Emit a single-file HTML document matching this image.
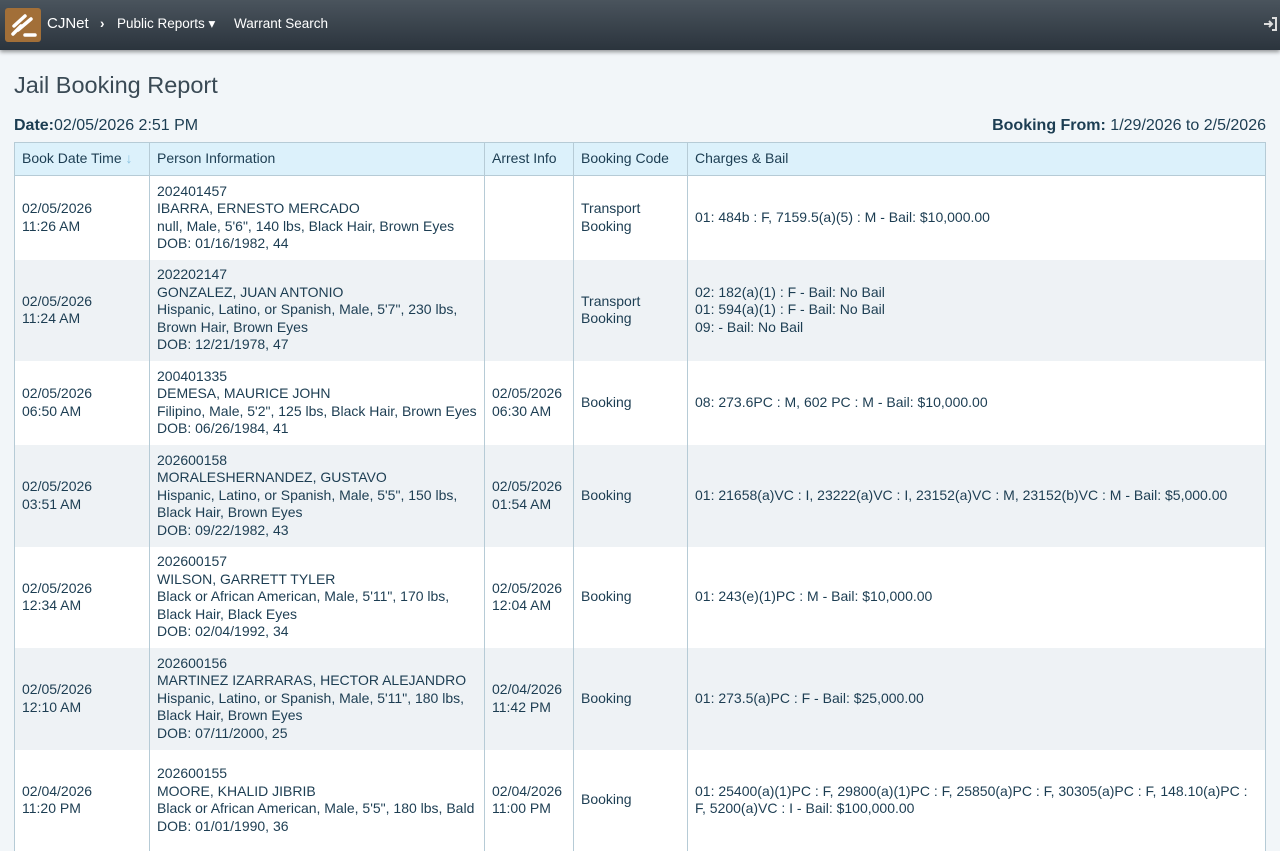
<!DOCTYPE html>
<html><head><meta charset="utf-8"><style>
*{box-sizing:border-box}
body{margin:0;width:1280px;height:800px;overflow:hidden;background:#f2f6f9;font-family:"Liberation Sans","DejaVu Sans",sans-serif;color:#1c3d52;font-size:14px}
.nav{position:absolute;left:0;top:0;width:1280px;height:50px;background:linear-gradient(#4a545d,#2b343d);box-shadow:0 2px 4px rgba(0,0,0,.4);color:#fff;z-index:2}
.logo{position:absolute;left:5px;top:8px;width:36px;height:34px;background:#a26f38;border-radius:3px}
.nav span{position:absolute;top:16px;font-size:13.5px}
h1{position:absolute;left:14px;top:72px;margin:0;font-weight:normal;font-size:23.5px;color:#3a4a55}
.d{position:absolute;top:117px;font-size:16px}
table{position:absolute;left:14px;top:142px;width:1252px;border-collapse:collapse;table-layout:fixed}
td,th{border:1px solid #b6cbd6;padding:0 7px;vertical-align:middle;line-height:17.5px;text-align:left;font-weight:normal;white-space:nowrap;overflow:hidden}
td{border-top:none;border-bottom:none}
th{background:#dcf1fb;height:33px}
tr.a td{background:#fff}tr.b td{background:#eef2f5}
</style></head><body>
<div class="nav"><div class="logo"><svg width="36" height="34" viewBox="0 0 36 34"><g stroke="#fff" stroke-width="3.5" stroke-linecap="round" fill="none"><path d="M9 18 L20 8"/><path d="M13 22 L26 11"/><path d="M16 18 L8 26"/><path d="M20 27 L30 27"/></g></svg></div>
<span style="left:47px;font-size:15px;top:15px">CJNet</span><span style="left:100px;font-weight:bold">›</span><span style="left:117px">Public Reports ▾</span><span style="left:234px">Warrant Search</span>
<svg style="position:absolute;left:1262px;top:16px" width="16" height="16" viewBox="0 0 16 16" fill="none" stroke="#ddd" stroke-width="2"><path d="M2 8h8M7 5l3 3-3 3M10 2h4v12h-4"/></svg></div>
<h1>Jail Booking Report</h1>
<div class="d" style="left:14px"><b>Date:</b>02/05/2026 2:51 PM</div>
<div class="d" style="right:14px"><b>Booking From:</b> 1/29/2026 to 2/5/2026</div>
<table>
<colgroup><col style="width:135px"><col style="width:335px"><col style="width:89px"><col style="width:114px"><col></colgroup>
<tr><th>Book Date Time <span style="color:#8bc3e0">↓</span></th><th>Person Information</th><th>Arrest Info</th><th>Booking Code</th><th>Charges &amp; Bail</th></tr>
<tr class="a" style="height:84px"><td>02/05/2026<br>11:26 AM</td><td>202401457<br>IBARRA, ERNESTO MERCADO<br>null, Male, 5'6", 140 lbs, Black Hair, Brown Eyes<br>DOB: 01/16/1982, 44</td><td></td><td>Transport<br>Booking</td><td>01: 484b : F, 7159.5(a)(5) : M - Bail: $10,000.00</td></tr>
<tr class="b" style="height:101px"><td>02/05/2026<br>11:24 AM</td><td>202202147<br>GONZALEZ, JUAN ANTONIO<br>Hispanic, Latino, or Spanish, Male, 5'7", 230 lbs,<br>Brown Hair, Brown Eyes<br>DOB: 12/21/1978, 47</td><td></td><td>Transport<br>Booking</td><td>02: 182(a)(1) : F - Bail: No Bail<br>01: 594(a)(1) : F - Bail: No Bail<br>09: - Bail: No Bail</td></tr>
<tr class="a" style="height:84px"><td>02/05/2026<br>06:50 AM</td><td>200401335<br>DEMESA, MAURICE JOHN<br>Filipino, Male, 5'2", 125 lbs, Black Hair, Brown Eyes<br>DOB: 06/26/1984, 41</td><td>02/05/2026<br>06:30 AM</td><td>Booking</td><td>08: 273.6PC : M, 602 PC : M - Bail: $10,000.00</td></tr>
<tr class="b" style="height:102px"><td>02/05/2026<br>03:51 AM</td><td>202600158<br>MORALESHERNANDEZ, GUSTAVO<br>Hispanic, Latino, or Spanish, Male, 5'5", 150 lbs,<br>Black Hair, Brown Eyes<br>DOB: 09/22/1982, 43</td><td>02/05/2026<br>01:54 AM</td><td>Booking</td><td>01: 21658(a)VC : I, 23222(a)VC : I, 23152(a)VC : M, 23152(b)VC : M - Bail: $5,000.00</td></tr>
<tr class="a" style="height:101px"><td>02/05/2026<br>12:34 AM</td><td>202600157<br>WILSON, GARRETT TYLER<br>Black or African American, Male, 5'11", 170 lbs,<br>Black Hair, Black Eyes<br>DOB: 02/04/1992, 34</td><td>02/05/2026<br>12:04 AM</td><td>Booking</td><td>01: 243(e)(1)PC : M - Bail: $10,000.00</td></tr>
<tr class="b" style="height:102px"><td>02/05/2026<br>12:10 AM</td><td>202600156<br>MARTINEZ IZARRARAS, HECTOR ALEJANDRO<br>Hispanic, Latino, or Spanish, Male, 5'11", 180 lbs,<br>Black Hair, Brown Eyes<br>DOB: 07/11/2000, 25</td><td>02/04/2026<br>11:42 PM</td><td>Booking</td><td>01: 273.5(a)PC : F - Bail: $25,000.00</td></tr>
<tr class="a" style="height:101px"><td>02/04/2026<br>11:20 PM</td><td>202600155<br>MOORE, KHALID JIBRIB<br>Black or African American, Male, 5'5", 180 lbs, Bald<br>DOB: 01/01/1990, 36</td><td>02/04/2026<br>11:00 PM</td><td>Booking</td><td>01: 25400(a)(1)PC : F, 29800(a)(1)PC : F, 25850(a)PC : F, 30305(a)PC : F, 148.10(a)PC :<br>F, 5200(a)VC : I - Bail: $100,000.00</td></tr>
</table>
</body></html>
